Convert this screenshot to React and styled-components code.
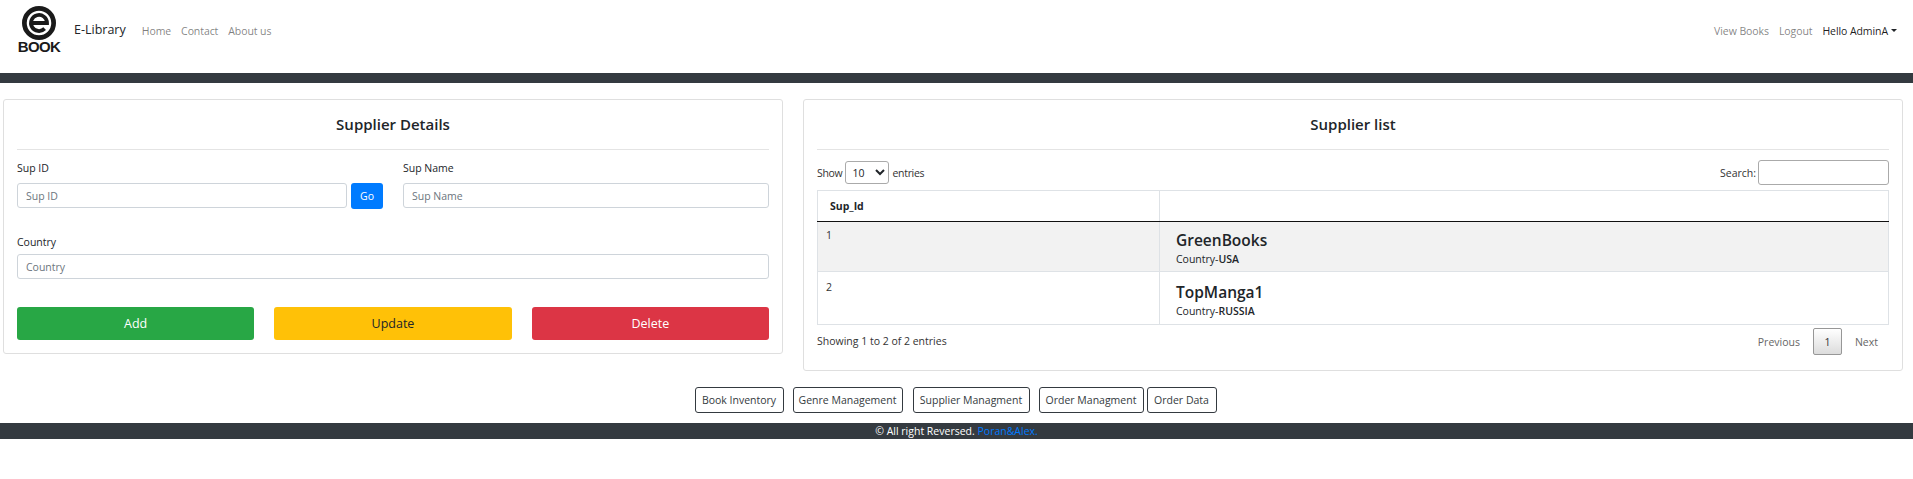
import React from 'react'
import styled, { createGlobalStyle } from 'styled-components'

const Global = createGlobalStyle`
  * { box-sizing: border-box; }
  html, body { margin: 0; background: #fff; }
  body {
    font-family: "Open Sans", "Noto Sans", "Liberation Sans", sans-serif;
    font-size: 10.5px;
    color: #212529;
  }
`

const Navbar = styled.nav`
  height: 73px;
  display: flex;
  align-items: center;
  padding: 0 16px 0 18px;
`
const Logo = styled.div`
  width: 42px;
  align-self: flex-start;
  margin-top: 6px;
  display: flex;
  flex-direction: column;
  align-items: center;
  color: #1a1a1a;
  svg { display: block; }
`
const LogoWord = styled.span`
  font-family: "Liberation Sans", sans-serif;
  font-weight: 700;
  font-size: 15px;
  line-height: 11px;
  letter-spacing: -0.6px;
  margin-top: 1px;
`
const Brand = styled.span`
  font-size: 12.5px;
  margin: -14px 16px 0 14px;
  color: #212529;
`
const NavLinks = styled.div`
  display: flex;
  gap: 10px;
  margin-top: -12px;
  letter-spacing: -0.08px;
  margin-left: ${p => (p.$right ? 'auto' : '0')};
`
const NavLink = styled.a`
  color: ${p => (p.$active ? 'rgba(0,0,0,.9)' : 'rgba(0,0,0,.5)')};
  white-space: nowrap;
  display: flex;
  align-items: center;
  gap: 3px;
`
const Caret = styled.i`
  width: 0;
  height: 0;
  border-top: 3px solid #212529;
  border-left: 3px solid transparent;
  border-right: 3px solid transparent;
`
const DarkBar = styled.div`
  height: 10px;
  background: #343a40;
`
const Columns = styled.main`
  display: flex;
  align-items: flex-start;
  gap: 20px;
  padding: 16px 10px 0 3px;
`
const Card = styled.section`
  flex: ${p => (p.$wide ? '0 0 1100px' : '0 0 780px')};
  height: ${p => (p.$wide ? '272px' : '255px')};
  border: 1px solid #dfdfdf;
  border-radius: 3px;
  padding: 0 13px;
`
const CardTitle = styled.h4`
  margin: 0;
  height: 50px;
  line-height: 49px;
  text-align: center;
  font-size: 15px;
  font-weight: 600;
  color: #212529;
  border-bottom: 1px solid #e4e4e4;
`
const FormGrid = styled.div`
  display: grid;
  grid-template-columns: 366px 366px;
  column-gap: 20px;
  padding-top: 11px;
`
const Field = styled.label`
  display: block;
  grid-column: ${p => (p.$full ? '1 / -1' : 'auto')};
  margin-top: ${p => (p.$full ? '26px' : '0')};
`
const FieldLabel = styled.div`
  line-height: 15px;
  margin-bottom: ${p => (p.$full ? '4px' : '7px')};
`
const InputRow = styled.div`
  display: flex;
  gap: 4px;
`
const Input = styled.input`
  width: 100%;
  min-width: 0;
  height: 25px;
  padding: 0 8px;
  font: inherit;
  border: 1px solid #ced4da;
  border-radius: 3px;
  background: #fff;
  &::placeholder { color: #6c757d; opacity: 1; }
`
const GoButton = styled.button`
  flex: 0 0 32px;
  height: 26px;
  padding: 0;
  border: 0;
  border-radius: 3px;
  font: inherit;
  color: #fff;
  background: #007bff;
`
const ActionRow = styled.div`
  display: grid;
  grid-template-columns: repeat(3, 1fr);
  column-gap: 20px;
  margin-top: 28px;
`
const ActionButton = styled.button`
  height: 33px;
  border: 0;
  border-radius: 3px;
  font: inherit;
  font-size: 12.5px;
  color: ${p => (p.$dark ? '#212529' : '#fff')};
  background: ${p => p.$bg};
`
const TableTools = styled.div`
  display: flex;
  justify-content: space-between;
  align-items: center;
  padding-top: 10px;
  height: 40px;
  color: #333;
`
const ToolGroup = styled.label`
  display: flex;
  align-items: center;
  gap: ${p => p.$gap}px;
  margin-top: -5px;
`
const ShowText = styled.span`
  letter-spacing: -0.3px;
`
const EntriesSelect = styled.select`
  width: 44px;
  height: 23px;
  padding: 0 0 0 2px;
  font: inherit;
  color: #212529;
  background: #fff;
  border: 1px solid #aaa;
  border-radius: 3px;
`
const SearchInput = styled.input`
  width: 131px;
  height: 25px;
  border: 1px solid #aaa;
  border-radius: 3px;
  background: #fff;
`
const Table = styled.table`
  width: 100%;
  table-layout: fixed;
  border-collapse: collapse;
  border: 1px solid #dee2e6;
`
const HeadCell = styled.th`
  width: ${p => p.$w || 'auto'};
  height: 31px;
  padding: 0 0 0 12px;
  text-align: left;
  font-weight: 700;
  color: #212529;
  border-right: 1px solid #dee2e6;
  border-bottom: 1px solid #111;
`
const Row = styled.tr`
  background: ${p => (p.$striped ? '#f2f2f2' : '#fff')};
  height: ${p => p.$h}px;
  border-bottom: 1px solid #dee2e6;
`
const IdCell = styled.td`
  padding: ${p => p.$top}px 8px 0;
  vertical-align: top;
  border-right: 1px solid #dee2e6;
  line-height: 16px;
  color: #333;
`
const InfoCell = styled.td`
  padding: ${p => p.$top}px 0 0 16px;
  vertical-align: middle;
`
const SupplierName = styled.div`
  font-size: 15.5px;
  font-weight: 600;
  line-height: 21px;
  color: #212529;
`
const SupplierMeta = styled.div`
  line-height: 15px;
  margin-top: 1px;
  b { font-weight: 600; }
`
const TableFooter = styled.div`
  display: flex;
  justify-content: space-between;
  align-items: flex-start;
  color: #333;
`
const Info = styled.div`
  padding-top: 8px;
  line-height: 16px;
`
const Pager = styled.div`
  display: flex;
  align-items: center;
  margin-top: 3px;
  margin-right: 11px;
`
const PageText = styled.a`
  color: #666;
`
const PageNumber = styled.a`
  width: 29px;
  height: 27px;
  margin: 0 13px;
  display: flex;
  align-items: center;
  justify-content: center;
  color: #333;
  border: 1px solid #979797;
  border-radius: 2px;
  background: linear-gradient(#fff, #dcdcdc);
`
const Shortcuts = styled.div`
  display: flex;
  justify-content: center;
  gap: 9px;
  margin-top: 16px;
  padding-right: 2px;
`
const ShortcutButton = styled.button`
  height: 26px;
  width: ${p => p.$w}px;
  margin-left: ${p => p.$ml || 0}px;
  padding: 0;
  font: inherit;
  color: #343a40;
  background: #fff;
  border: 1px solid #343a40;
  border-radius: 3px;
`
const Footer = styled.footer`
  margin-top: 10px;
  height: 16px;
  line-height: 16px;
  text-align: center;
  color: #fff;
  background: #343a40;
  a { color: #007bff; }
`

const EbookMark = () => (
  <svg width="34" height="34" viewBox="0 0 36 36" fill="none" stroke="currentColor">
    <circle cx="18" cy="18" r="15.5" strokeWidth="5" />
    <path d="M9.500 18H26.500A8.500 8.500 0 1 0 24 24" strokeWidth="4" />
  </svg>
)

const SupplierForm = () => (
  <Card>
    <CardTitle>Supplier Details</CardTitle>
    <FormGrid>
      <Field>
        <FieldLabel>Sup ID</FieldLabel>
        <InputRow>
          <Input placeholder="Sup ID" />
          <GoButton>Go</GoButton>
        </InputRow>
      </Field>
      <Field>
        <FieldLabel>Sup Name</FieldLabel>
        <Input placeholder="Sup Name" />
      </Field>
      <Field $full>
        <FieldLabel $full>Country</FieldLabel>
        <Input placeholder="Country" />
      </Field>
    </FormGrid>
    <ActionRow>
      <ActionButton $bg="#28a745">Add</ActionButton>
      <ActionButton $bg="#ffc107" $dark>Update</ActionButton>
      <ActionButton $bg="#dc3545">Delete</ActionButton>
    </ActionRow>
  </Card>
)

const suppliers = [
  { id: 1, name: 'GreenBooks', country: 'USA', h: 50, idTop: 5, infoTop: 3 },
  { id: 2, name: 'TopManga1', country: 'RUSSIA', h: 53, idTop: 7, infoTop: 5 },
]

const SupplierList = () => (
  <Card $wide>
    <CardTitle>Supplier list</CardTitle>
    <TableTools>
      <ToolGroup $gap={3}>
        <ShowText>Show</ShowText>
        <EntriesSelect defaultValue="10">
          <option>10</option>
          <option>25</option>
        </EntriesSelect>
        <ShowText>entries</ShowText>
      </ToolGroup>
      <ToolGroup $gap={2}>
        Search:
        <SearchInput />
      </ToolGroup>
    </TableTools>
    <Table>
      <thead>
        <tr>
          <HeadCell $w="342px">Sup_Id</HeadCell>
          <HeadCell />
        </tr>
      </thead>
      <tbody>
        {suppliers.map((s, i) => (
          <Row key={s.id} $striped={i === 0} $h={s.h}>
            <IdCell $top={s.idTop}>{s.id}</IdCell>
            <InfoCell $top={s.infoTop}>
              <SupplierName>{s.name}</SupplierName>
              <SupplierMeta>Country-<b>{s.country}</b></SupplierMeta>
            </InfoCell>
          </Row>
        ))}
      </tbody>
    </Table>
    <TableFooter>
      <Info>Showing 1 to 2 of 2 entries</Info>
      <Pager>
        <PageText>Previous</PageText>
        <PageNumber>1</PageNumber>
        <PageText>Next</PageText>
      </Pager>
    </TableFooter>
  </Card>
)

export default function App() {
  return (
    <>
      <Global />
      <Navbar>
        <Logo>
          <EbookMark />
          <LogoWord>BOOK</LogoWord>
        </Logo>
        <Brand>E-Library</Brand>
        <NavLinks>
          <NavLink>Home</NavLink>
          <NavLink>Contact</NavLink>
          <NavLink>About us</NavLink>
        </NavLinks>
        <NavLinks $right>
          <NavLink>View Books</NavLink>
          <NavLink>Logout</NavLink>
          <NavLink $active>Hello AdminA<Caret /></NavLink>
        </NavLinks>
      </Navbar>
      <DarkBar />
      <Columns>
        <SupplierForm />
        <SupplierList />
      </Columns>
      <Shortcuts>
        <ShortcutButton $w={89}>Book Inventory</ShortcutButton>
        <ShortcutButton $w={110}>Genre Management</ShortcutButton>
        <ShortcutButton $w={117} $ml={1}>Supplier Managment</ShortcutButton>
        <ShortcutButton $w={105}>Order Managment</ShortcutButton>
        <ShortcutButton $w={70} $ml={-6}>Order Data</ShortcutButton>
      </Shortcuts>
      <Footer>© All right Reversed. <a>Poran&amp;Alex.</a></Footer>
    </>
  )
}
